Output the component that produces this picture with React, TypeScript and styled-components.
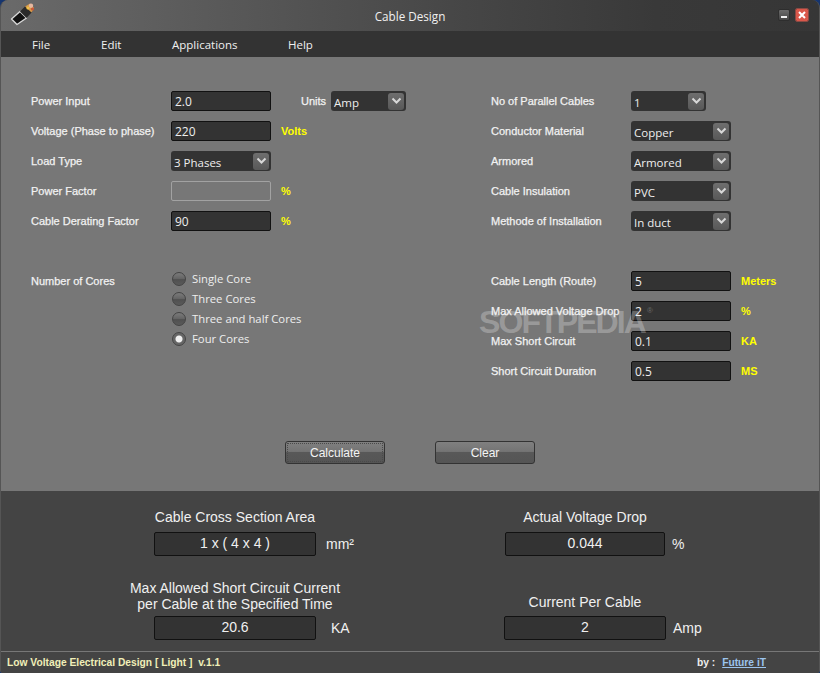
import React from "react";
import styled, { createGlobalStyle } from "styled-components";

const Global = createGlobalStyle`
  html, body { margin: 0; padding: 0; background: #16356f; }
  #root { width: 820px; height: 673px; overflow: hidden; }
  * { box-sizing: border-box; }
`;

const Win = styled.div`
  width: 820px; height: 673px; display: flex; flex-direction: column;
  border-radius: 8px 8px 3px 3px; overflow: hidden; position: relative;
  background: #444; border-left: 1px solid #555; border-right: 1px solid #555;
  font-family: "Liberation Sans", Arial, sans-serif;
`;
const TitleBar = styled.div`
  height: 31px; flex: none; display: flex; align-items: center; position: relative;
  background: linear-gradient(90deg, #6a6a6a 0%, #5a5a5a 25%, #474747 55%, #393939 80%, #363636 100%);
`;
const Logo = styled.svg`
  width: 26px; height: 24px; margin-left: 9px; flex: none; margin-top: -3px;
`;
const Title = styled.div`
  position: absolute; left: 0; right: 0; top: 8px; text-align: center;
  color: #f0f0f0; font: 11.7px "Open Sans", sans-serif; line-height: 16px;
`;
const WinButtons = styled.div`
  margin-left: auto; margin-right: 11px; display: flex; gap: 6px; margin-top: -1px; align-items: center;
`;
const MinBtn = styled.div`
  width: 12px; height: 12px; background: linear-gradient(#6b6b6b, #444); border: 1px solid #2e2e2e; border-radius: 2px;
  display: flex; align-items: flex-end; justify-content: center; padding-bottom: 2px;
  &::after { content: ""; width: 6px; height: 2px; background: #eee; }
`;
const CloseBtn = styled.div`
  width: 12px; height: 12px; background: #d9574a; display: flex; align-items: center; justify-content: center;
  border-radius: 1px; outline: 1px solid #8a4a44;
`;
const MenuBar = styled.div`
  height: 26px; flex: none; background: #333; display: flex; align-items: center;
  color: #f0f0f0; font: 11.5px "Open Sans", sans-serif;
`;
const MenuItem = styled.span<{ $w: number }>`
  width: ${(p) => p.$w}px; flex: none;
  &:first-child { margin-left: 31px; }
`;
const Main = styled.div`
  height: 434px; flex: none; background: #777; padding: 34px 0 0 30px; position: relative;
`;
const Columns = styled.div`
  display: grid; grid-template-columns: 460px 300px;
`;
const Col = styled.div`
  display: flex; flex-direction: column; gap: 10px;
`;
const Row = styled.div`
  display: flex; height: 20px; align-items: center;
`;
const Spacer = styled.div`
  height: 20px;
`;
const Label = styled.label`
  width: 140px; flex: none; color: #f2f2f2; font-size: 11px; -webkit-text-stroke: .25px #f2f2f2;
  white-space: nowrap; position: relative;
`;
const Field = styled.div<{ $disabled?: boolean; $w?: number }>`
  width: ${(p) => p.$w ?? 100}px; height: 20px; flex: none; border-radius: 2px;
  background: ${(p) => (p.$disabled ? "#777" : "#333")};
  border: 1px solid ${(p) => (p.$disabled ? "#a2a2a2" : "#111")};
  color: #eee; font: 12px "Open Sans", sans-serif; line-height: 19px; padding-left: 3px;
`;
const Select = styled.div<{ $w?: number }>`
  width: ${(p) => p.$w ?? 100}px; height: 20px; flex: none; border-radius: 3px; background: #333;
  display: flex; align-items: center; justify-content: space-between; padding: 0 2px 0 3px;
  color: #eee; font: 11.5px "Open Sans", sans-serif; position: relative;
`;
const SelectText = styled.span`
  padding-top: 2px;
`;
const Chevron = styled.span`
  width: 16px; height: 17px; border-radius: 3px; background: linear-gradient(#6e6e6e, #585858);
  display: flex; align-items: center; justify-content: center;
`;
const Unit = styled.span`
  color: #ffff00; font-size: 11px; font-weight: bold; margin-left: 10px; white-space: nowrap;
`;
const UnitsLabel = styled.span`
  width: 30px; flex: none; color: #f2f2f2; font-size: 11px; -webkit-text-stroke: .25px #f2f2f2; margin-left: 30px;
`;
const CoresRow = styled.div`
  display: flex; height: 80px;
`;
const CoresLabel = styled(Label)`
  padding-top: 4px;
`;
const Radios = styled.div`
  display: flex; flex-direction: column; gap: 5px;
`;
const Radio = styled.div`
  display: flex; align-items: center; height: 15px; color: #eee; font: 11.3px "Open Sans", sans-serif; white-space: nowrap;
`;
const Dot = styled.span<{ $on?: boolean }>`
  width: 14px; height: 14px; border-radius: 50%; border: 1px solid #444; margin: 0 6px 0 1px; flex: none;
  background: ${(p) => p.$on ? "radial-gradient(circle, #f0f0f0 0 3px, #666 4px)" : "linear-gradient(#7a7a7a 0, #666 45%, #505050 55%, #5a5a5a 100%)"};
`;
const Buttons = styled.div`
  position: absolute; left: 284px; top: 384px; display: flex; gap: 50px;
`;
const Btn = styled.div<{ $focus?: boolean }>`
  width: 100px; height: 23px; border-radius: 3px; border: 1px solid #333;
  background: linear-gradient(#808080 0, #747474 45%, #585858 50%, #555 100%);
  color: #f4f4f4; font-size: 12px; display: flex; align-items: center; justify-content: center; position: relative;
  ${(p) => p.$focus ? `&::after { content: ""; position: absolute; inset: 1px; border: 1px dotted #4a4a4a; }` : ""}
`;
const Watermark = styled.div`
  position: absolute; left: 478px; top: 239px; color: rgba(255,255,255,.27); font-size: 32px; font-weight: bold;
  letter-spacing: -1.9px; line-height: 30px; pointer-events: none; white-space: nowrap;
  & sup { font-size: 8px; font-weight: normal; vertical-align: 20px; margin-left: 2px; letter-spacing: 0; }
`;
const Results = styled.div`
  height: 160px; flex: none; background: #444; display: grid; grid-template-columns: 503px 315px;
  grid-template-rows: 65px 84px;
  color: #f0f0f0; font-size: 14px;
`;
const Result = styled.div<{ $x: number }>`
  padding-left: ${(p) => p.$x}px; display: flex; flex-direction: column; justify-content: flex-end;
`;
const ResultLabel = styled.div<{ $w: number; $gap: number }>`
  width: ${(p) => p.$w + 100}px; margin: 0 0 ${(p) => p.$gap}px -50px;
  text-align: center; line-height: 16px; white-space: nowrap;
`;
const ResultLine = styled.div<{ $h: number }>`
  display: flex; align-items: center; height: ${(p) => p.$h}px;
`;
const ResultBox = styled.div<{ $w: number; $h: number }>`
  width: ${(p) => p.$w}px; height: ${(p) => p.$h}px; background: #333; border: 1px solid #111; border-radius: 2px; text-align: center;
  line-height: ${(p) => p.$h - 3}px; font-size: 14px;
`;
const ResultUnit = styled.span<{ $m: number }>`
  margin-left: ${(p) => p.$m}px; font-size: 14px;
`;
const Footer = styled.div`
  height: 22px; flex: none; border-top: 1px solid #777; background: #444; display: flex; align-items: center;
  font-size: 10.25px; font-weight: bold; padding: 0 0 0 6px;
`;
const Version = styled.span`
  color: #f0efb8;
`;
const By = styled.span`
  color: #eee; margin-left: auto;
`;
const Link = styled.span`
  color: #9cc4ee; text-decoration: underline; margin: 0 53px 0 7px;
`;

const ChevronIcon = () => (
  <svg width="11" height="8" viewBox="0 0 11 8"><path d="M1.5 1.5 5.5 5.5 9.5 1.5" fill="none" stroke="#d8d8d8" strokeWidth="2" /></svg>
);

const Sel = ({ v, w }: { v: string; w?: number }) => (
  <Select $w={w}><SelectText>{v}</SelectText><Chevron><ChevronIcon /></Chevron></Select>
);

export default function App() {
  return (
    <Win>
      <Global />
      <TitleBar>
        <Logo viewBox="0 0 26 24">
          <path d="M1.5 17 10 9.5 16.5 16 7 22.5Z" fill="#111" stroke="#d8d8d8" strokeWidth="1.4" strokeLinejoin="round" />
          <path d="M10 9.5 15.5 4 22 10 16.5 16Z" fill="#2a2a2a" />
          <path d="M15 4.5 20 1.5 24 6 21.5 10.5Z" fill="#d89a48" />
          <circle cx="21" cy="3.8" r="2.2" fill="#e6b8a0" />
          <circle cx="22.5" cy="7" r="1.6" fill="#c9583a" />
          <circle cx="18" cy="6" r="1.6" fill="#eec04a" />
        </Logo>
        <Title>Cable Design</Title>
        <WinButtons>
          <MinBtn />
          <CloseBtn>
            <svg width="8" height="8" viewBox="0 0 8 8"><path d="M1 1 7 7M7 1 1 7" stroke="#fff" strokeWidth="2" /></svg>
          </CloseBtn>
        </WinButtons>
      </TitleBar>
      <MenuBar>
        <MenuItem $w={69}>File</MenuItem>
        <MenuItem $w={71}>Edit</MenuItem>
        <MenuItem $w={116}>Applications</MenuItem>
        <MenuItem $w={40}>Help</MenuItem>
      </MenuBar>
      <Main>
        <Columns>
          <Col>
            <Row><Label>Power Input</Label><Field>2.0</Field><UnitsLabel>Units</UnitsLabel><Sel v="Amp" w={75} /></Row>
            <Row><Label>Voltage (Phase to phase)</Label><Field>220</Field><Unit>Volts</Unit></Row>
            <Row><Label>Load Type</Label><Sel v="3 Phases" /></Row>
            <Row><Label>Power Factor</Label><Field $disabled /><Unit>%</Unit></Row>
            <Row><Label>Cable Derating Factor</Label><Field>90</Field><Unit>%</Unit></Row>
            <Spacer />
            <CoresRow>
              <CoresLabel>Number of Cores</CoresLabel>
              <Radios>
                <Radio><Dot />Single Core</Radio>
                <Radio><Dot />Three Cores</Radio>
                <Radio><Dot />Three and half Cores</Radio>
                <Radio><Dot $on />Four Cores</Radio>
              </Radios>
            </CoresRow>
          </Col>
          <Col>
            <Row><Label>No of Parallel Cables</Label><Sel v="1" w={75} /></Row>
            <Row><Label>Conductor Material</Label><Sel v="Copper" /></Row>
            <Row><Label>Armored</Label><Sel v="Armored" /></Row>
            <Row><Label>Cable Insulation</Label><Sel v="PVC" /></Row>
            <Row><Label>Methode of Installation</Label><Sel v="In duct" /></Row>
            <Spacer />
            <Row><Label>Cable Length (Route)</Label><Field>5</Field><Unit>Meters</Unit></Row>
            <Row><Label>Max Allowed Voltage Drop</Label><Field>2</Field><Unit>%</Unit></Row>
            <Row><Label>Max Short Circuit</Label><Field>0.1</Field><Unit>KA</Unit></Row>
            <Row><Label>Short Circuit Duration</Label><Field>0.5</Field><Unit>MS</Unit></Row>
          </Col>
        </Columns>
        <Watermark>SOFTPEDIA<sup>®</sup></Watermark>
        <Buttons>
          <Btn $focus>Calculate</Btn>
          <Btn>Clear</Btn>
        </Buttons>
      </Main>
      <Results>
        <Result $x={153}>
          <ResultLabel $w={162} $gap={7}>Cable Cross Section Area</ResultLabel>
          <ResultLine $h={24}><ResultBox $w={162} $h={24}>1 x ( 4 x 4 )</ResultBox><ResultUnit $m={10}>mm²</ResultUnit></ResultLine>
        </Result>
        <Result $x={1}>
          <ResultLabel $w={160} $gap={7}>Actual Voltage Drop</ResultLabel>
          <ResultLine $h={24}><ResultBox $w={160} $h={24}>0.044</ResultBox><ResultUnit $m={7}>%</ResultUnit></ResultLine>
        </Result>
        <Result $x={153}>
          <ResultLabel $w={162} $gap={4}>Max Allowed Short Circuit Current<br />per Cable at the Specified Time</ResultLabel>
          <ResultLine $h={24}><ResultBox $w={162} $h={24}>20.6</ResultBox><ResultUnit $m={15}>KA</ResultUnit></ResultLine>
        </Result>
        <Result $x={0}>
          <ResultLabel $w={162} $gap={6}>Current Per Cable</ResultLabel>
          <ResultLine $h={24}><ResultBox $w={162} $h={24}>2</ResultBox><ResultUnit $m={7}>Amp</ResultUnit></ResultLine>
        </Result>
      </Results>
      <Footer>
        <Version>Low Voltage Electrical Design [ Light ]&nbsp; v.1.1</Version>
        <By>by :</By>
        <Link>Future iT</Link>
      </Footer>
    </Win>
  );
}
